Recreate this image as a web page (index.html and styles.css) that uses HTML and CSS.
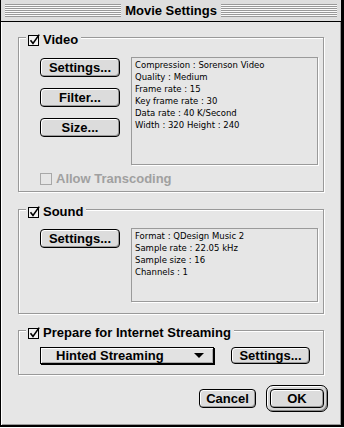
FILE: index.html
```html
<!DOCTYPE html>
<html lang="en">
<head>
    <meta charset="UTF-8">
    <title>Movie Settings</title>
    <link rel="stylesheet" href="styles.css">
</head>
<body>

<div class="window">
    <div class="titlebar">
        <div class="stripes"><span class="title">Movie Settings</span></div>
    </div>

    <div class="content">
        <!-- video -->
        <div class="group group-video">
            <div class="group-label">
                <svg class="check" width="12" height="12" viewBox="0 0 12 12"><rect x="0.5" y="1.5" width="10" height="10" fill="#f2f2f2" stroke="#000"/><path d="M2.5 6.2 L5 9.5 L11.2 0.6" fill="none" stroke="#000" stroke-width="1.6"/></svg>
                <span>Video</span>
            </div>
            <div class="group-row">
                <div class="btn-col">
                    <button class="btn">Settings...</button>
                    <button class="btn">Filter...</button>
                    <button class="btn">Size...</button>
                </div>
                <div class="info info-video">
                    <div>Compression : Sorenson Video</div>
                    <div>Quality : Medium</div>
                    <div>Frame rate : 15</div>
                    <div>Key frame rate : 30</div>
                    <div>Data rate : 40 K/Second</div>
                    <div>Width : 320 Height : 240</div>
                </div>
            </div>
            <div class="check-row disabled">
                <svg class="check" width="12" height="12" viewBox="0 0 12 12"><rect x="0.5" y="0.5" width="11" height="11" fill="none" stroke="#a8a8a8"/></svg>
                <span>Allow Transcoding</span>
            </div>
        </div>

        <!-- sound -->
        <div class="group group-sound">
            <div class="group-label">
                <svg class="check" width="12" height="12" viewBox="0 0 12 12"><rect x="0.5" y="1.5" width="10" height="10" fill="#f2f2f2" stroke="#000"/><path d="M2.5 6.2 L5 9.5 L11.2 0.6" fill="none" stroke="#000" stroke-width="1.6"/></svg>
                <span>Sound</span>
            </div>
            <div class="group-row">
                <div class="btn-col">
                    <button class="btn">Settings...</button>
                </div>
                <div class="info info-sound">
                    <div>Format : QDesign Music 2</div>
                    <div>Sample rate : 22.05 kHz</div>
                    <div>Sample size : 16</div>
                    <div>Channels : 1</div>
                </div>
            </div>
        </div>

        <!-- streaming -->
        <div class="group group-stream">
            <div class="group-label">
                <svg class="check" width="12" height="12" viewBox="0 0 12 12"><rect x="0.5" y="1.5" width="10" height="10" fill="#f2f2f2" stroke="#000"/><path d="M2.5 6.2 L5 9.5 L11.2 0.6" fill="none" stroke="#000" stroke-width="1.6"/></svg>
                <span>Prepare for Internet Streaming</span>
            </div>
            <div class="stream-row">
                <div class="popup">
                    <span>Hinted Streaming</span>
                    <svg width="10" height="5" viewBox="0 0 10 5"><polygon points="0,0 10,0 5,5" fill="#000"/></svg>
                </div>
                <button class="btn btn-small">Settings...</button>
            </div>
        </div>

        <div class="dialog-buttons">
            <button class="btn btn-cancel">Cancel</button>
            <div class="default-ring">
                <button class="btn btn-ok">OK</button>
            </div>
        </div>
    </div>
</div>

</body>
</html>
```

FILE: styles.css
```css
body {
    margin: 0;
    background: #fff;
    font-family: "Liberation Sans", Arial, sans-serif;
}
.window {
    width: 344px;
    height: 427px;
    box-sizing: border-box;
    background: #e6e6e6;
    border-left: 1px solid #000;
    border-right: 3px solid #000;
    border-bottom: 2px solid #000;
    display: flex;
    flex-direction: column;
}
.titlebar {
    height: 21px;
    border-bottom: 1px solid #000;
    background: #dedede;
    box-sizing: content-box;
    padding: 4px 4px 0 4px;
    height: 17px;
}
.stripes {
    display: flex;
    align-items: center;
    height: 13px;
}
.stripes::before,
.stripes::after {
    content: "";
    flex: 1;
    height: 13px;
    background: repeating-linear-gradient(#999 0 1px, #fafafa 1px 2px);
}
.title {
    font-weight: bold;
    font-size: 13px;
    line-height: 13px;
    padding: 0 4px;
}
.content {
    flex: 1;
    padding: 15px 0 0 17px;
    box-shadow: inset 1px 0 0 #fff, inset -1px -1px 0 #999;
}
.group {
    position: relative;
    width: 306px;
    box-sizing: border-box;
    border: 1px solid #999;
    box-shadow: inset 1px 1px 0 #fff, 1px 1px 0 #fff;
    padding-left: 21px;
}
.group-video {
    height: 155px;
    padding-top: 19px;
}
.group-sound {
    height: 105px;
    margin-top: 17px;
    padding-top: 18px;
}
.group-stream {
    height: 45px;
    margin-top: 16px;
    padding-top: 16px;
}
.group-label {
    position: absolute;
    top: -5px;
    left: 7px;
    height: 14px;
    padding: 0 3px 0 2px;
    background: #e6e6e6;
    display: flex;
    align-items: center;
    gap: 3px;
    font-weight: bold;
    font-size: 13px;
    line-height: 14px;
}
.check {
    display: block;
}
.group-row {
    display: flex;
    align-items: flex-start;
}
.btn-col {
    display: flex;
    flex-direction: column;
    gap: 11px;
    margin-top: 1px;
}
.btn {
    width: 80px;
    height: 19px;
    padding: 0;
    border: 1px solid #000;
    border-radius: 4px;
    background: #dcdcdc;
    box-shadow: inset 1px 1px 0 #fff, inset -1px -1px 0 #9a9a9a;
    font-family: "Liberation Sans", Arial, sans-serif;
    font-weight: bold;
    font-size: 13px;
    line-height: 17px;
    color: #000;
}
.info {
    margin-left: 11px;
    width: 187px;
    box-sizing: border-box;
    border: 1px solid #9a9a9a;
    box-shadow: 1px 1px 0 #fff;
    padding: 1px 3px;
    font-family: "DejaVu Sans", Verdana, sans-serif;
    font-size: 8.5px;
    line-height: 12px;
}
.info-video {
    height: 108px;
}
.info-sound {
    height: 74px;
}
.check-row {
    display: flex;
    align-items: center;
    gap: 4px;
    margin-top: 6px;
    font-weight: bold;
    font-size: 13px;
}
.check-row.disabled {
    color: #a0a0a0;
}
.stream-row {
    display: flex;
    gap: 17px;
}
.popup {
    width: 174px;
    height: 17px;
    box-sizing: border-box;
    border: 1px solid #000;
    box-shadow: 1px 1px 0 #000, inset 1px 1px 0 #fff, inset -1px -1px 0 #aaa;
    background: #e2e2e2;
    display: flex;
    align-items: center;
    justify-content: space-between;
    padding: 0 9px 0 15px;
    font-weight: bold;
    font-size: 13px;
}
.btn-small {
    width: 79px;
    height: 17px;
    line-height: 15px;
}
.dialog-buttons {
    display: flex;
    justify-content: flex-end;
    align-items: center;
    gap: 10px;
    margin-top: 10px;
    padding-right: 13px;
}
.btn-cancel {
    width: 57px;
}
.default-ring {
    padding: 3px;
    border: 1px solid #000;
    border-radius: 7px;
    background: #d4d4d4;
    box-shadow: inset 1px 1px 0 #fff, inset -1px -1px 0 #888;
    display: flex;
}
.btn-ok {
    width: 54px;
}
```
